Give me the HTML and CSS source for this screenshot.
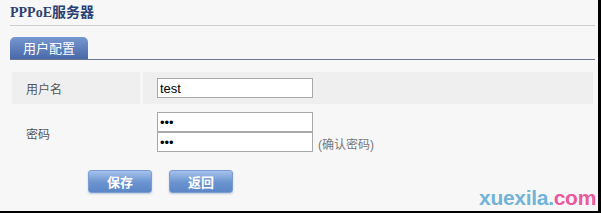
FILE: index.html
```html
<!DOCTYPE html>
<html>
<head>
<meta charset="utf-8">
<link rel="stylesheet" href="styles.css">
</head>
<body>
<div class="frame">
  <div class="title">PPPoE服务器</div>
  <div class="tabs"><div class="tab">用户配置</div></div>
  <div class="form">
    <div class="row shaded">
      <div class="label">用户名</div>
      <div class="value"><input class="field" type="text" value="test"></div>
    </div>
    <div class="row tall">
      <div class="label">密码</div>
      <div class="value">
        <div class="stack">
          <input class="field" type="password" value="abc">
          <div class="confirm-line"><input class="field" type="password" value="abc"><span class="hint">(确认密码)</span></div>
        </div>
      </div>
    </div>
  </div>
  <div class="buttons">
    <button class="btn">保存</button>
    <button class="btn">返回</button>
  </div>
  <div class="watermark"><span class="wm-a">xuexila.</span><span class="wm-b">com</span></div>
</div>
</body>
</html>
```
FILE: styles.css
```css
html, body { margin: 0; padding: 0; }
body { background: #f7f7f7; width: 601px; height: 213px; overflow: hidden; font-family: "Liberation Sans", "Noto Sans CJK SC", sans-serif; }
.frame { position: relative; width: 598px; height: 211px; border-right: 3px solid #000; border-bottom: 2px solid #000; background: #f7f7f7; }
.title { margin: 0 3px 0 10px; padding-top: 4px; height: 21px; border-bottom: 1px solid #cfcfcf; font-family: "Liberation Serif", "Noto Sans CJK SC", serif; font-weight: bold; font-size: 14px; line-height: 18px; color: #2c4171; }
.tabs { margin: 11px 3px 0 10px; border-bottom: 1px solid #6a7791; display: flex; }
.tab { width: 78px; height: 22px; border-radius: 5px 5px 0 0; background: linear-gradient(#7698d0, #4868a8); color: #fff; font-size: 13px; line-height: 23px; text-align: center; }
.form { margin: 12px 5px 0 12px; }
.row { display: flex; gap: 3px; }
.row.shaded .label, .row.shaded .value { background: #efefef; }
.row.shaded { height: 32px; }
.label { width: 114px; padding-left: 14px; font-size: 12px; color: #555; display: flex; align-items: center; }
.value { flex: 1; padding-left: 14px; display: flex; align-items: center; }
.row.tall { height: 57px; }
.row.tall .value { align-items: flex-start; padding-top: 8px; }
.row.tall .label { padding-top: 2px; }
.stack { display: flex; flex-direction: column; }
.confirm-line { display: flex; align-items: flex-end; }
.field { box-sizing: border-box; width: 156px; height: 20px; margin: 0; border: 1px solid #a9a9a9; background: #fff; padding: 0 2px; font-family: "Liberation Sans", sans-serif; font-size: 13px; color: #000; outline: none; }
.hint { font-size: 12px; color: #777; margin-left: 5px; line-height: 14px; }
.buttons { display: flex; gap: 17px; margin: 9px 0 0 88px; }
.btn { width: 64px; height: 23px; padding: 0; border: 1px solid #7c9dcf; border-radius: 3px; background: linear-gradient(#a4c1ea, #6a93d0 55%, #5c86c6); color: #fff; font-family: "Noto Sans CJK SC", sans-serif; font-weight: bold; font-size: 13px; line-height: 20px; box-shadow: 0 1px 2px rgba(80,110,160,0.35); }
.watermark { position: absolute; right: 2px; bottom: 1px; font-family: "Liberation Sans", sans-serif; font-weight: bold; font-size: 21px; letter-spacing: -0.3px; }
.wm-a { color: #72b3d6; }
.wm-b { color: #ea5a9d; }
```
